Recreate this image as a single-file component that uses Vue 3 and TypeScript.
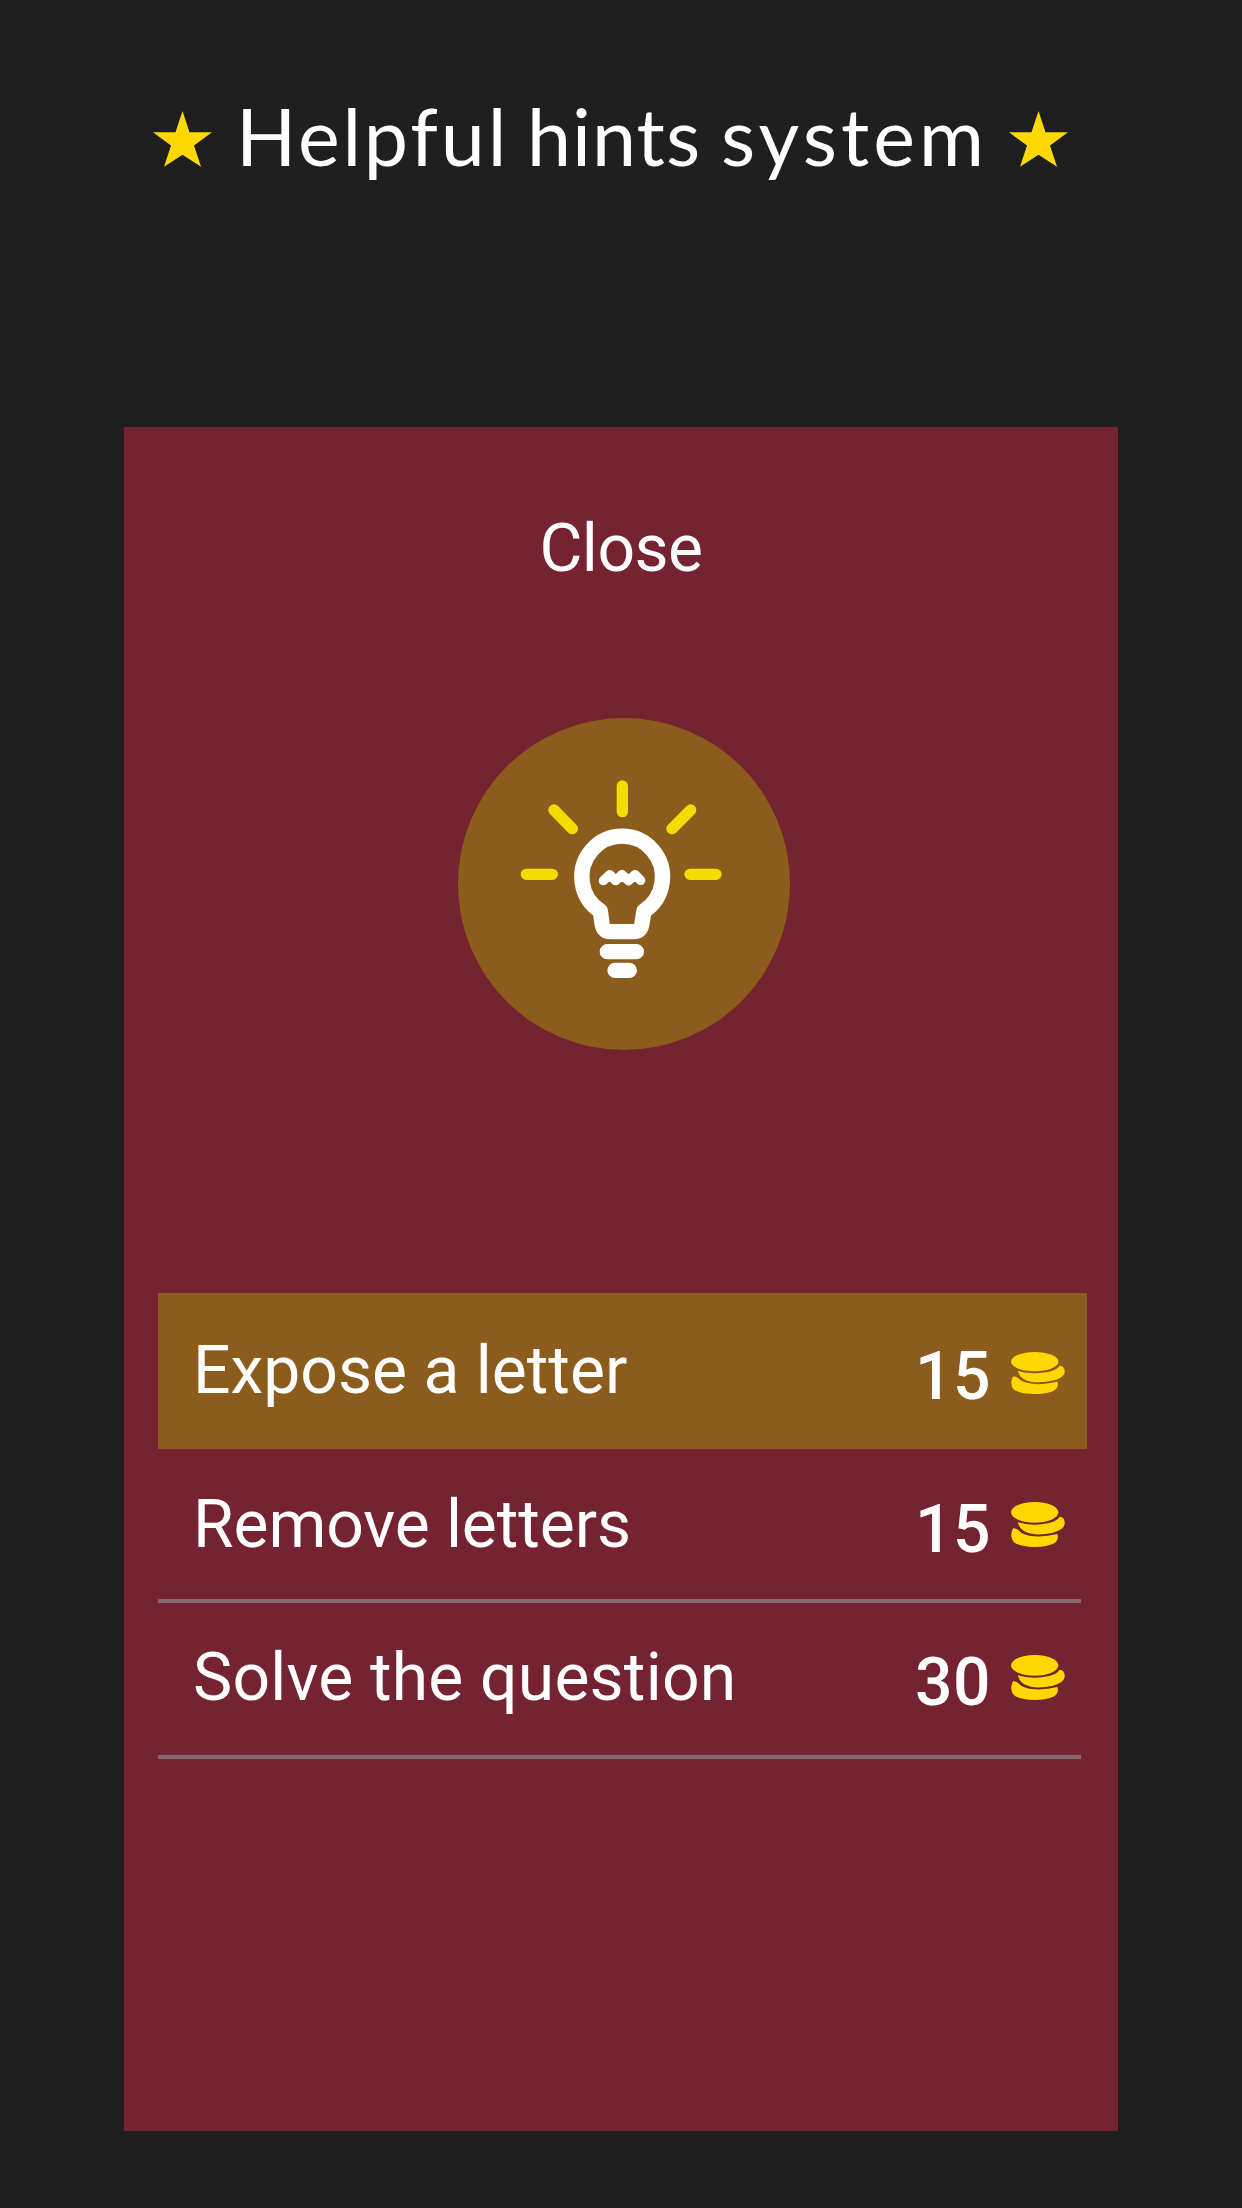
<script setup lang="ts">
interface Hint {
  label: string
  cost: number
  modifier: string
}

const hints: Hint[] = [
  { label: 'Expose a letter', cost: 15, modifier: 'active' },
  { label: 'Remove letters', cost: 15, modifier: 'middle' },
  { label: 'Solve the question', cost: 30, modifier: 'last' },
]
</script>

<template>
  <main class="screen">
    <header class="title">
      <svg class="star" viewBox="0 0 59 56">
        <path d="M29.5 0 36.5 21.3H59L41 34.6 48 55.7 29.5 43.7 11 55.7 18 34.6 0 21.3H22.5Z" />
      </svg>
      <h1 class="heading">
        <span class="word first">Helpful</span>
        <span class="word second">hints</span>
        <span class="word third">system</span>
      </h1>
      <svg class="star" viewBox="0 0 59 56">
        <path d="M29.5 0 36.5 21.3H59L41 34.6 48 55.7 29.5 43.7 11 55.7 18 34.6 0 21.3H22.5Z" />
      </svg>
    </header>

    <section class="panel">
      <div class="close">Close</div>

      <svg class="bulb" viewBox="54 51 996 996">
        <circle cx="552" cy="549" r="498" fill="#8c5c1c" />
        <g stroke="#f4dc00" stroke-width="34" stroke-linecap="round">
          <path d="M547 255V332M342 327 397 383M752 327 696 383M259 520H337M750 520H828" />
        </g>
        <g fill="none" stroke="#fff" stroke-linejoin="round" stroke-linecap="round">
          <path
            stroke-width="46"
            d="M481 630A121 122 0 1 1 612 630L606 667Q603 692 581 692H511Q489 692 486 667Z"
          />
          <path stroke-width="28" d="M490 539 509 521 527 539 546 521 566 539 585 521 602 538" />
          <path stroke-width="46" d="M502 752H589M525 808H568" />
        </g>
      </svg>

      <ul class="hints">
        <li v-for="hint in hints" :key="hint.label" class="hint" :class="hint.modifier">
          <span class="label">{{ hint.label }}</span>
          <span class="cost">{{ hint.cost }}</span>
          <svg class="coins" viewBox="0 0 164 135" preserveAspectRatio="none">
            <ellipse cx="72" cy="31" rx="72" ry="31" />
            <path d="M21 61Q45 69 75 68Q112 67 133 57Q144 51 148 44Q164 45 163 66Q160 84 127 92Q100 99 72 97Q27 92 21 61Z" />
            <path d="M6 79Q16 78 24 86Q36 100 72 103Q105 105 141 96Q147 116 127 126Q105 135 72 135Q30 135 9 121Q-6 104 6 79Z" />
          </svg>
        </li>
      </ul>
    </section>
  </main>
</template>

<style>
body {
  margin: 0;
  background: #1f1f1f;
}
</style>

<style scoped>
.screen {
  box-sizing: border-box;
  width: 1242px;
  height: 2208px;
  background: #1f1f1f;
  color: #fff;
  overflow: hidden;
}
.title {
  box-sizing: border-box;
  height: 427px;
  padding: 88px 0 0 153px;
  display: flex;
  align-items: flex-start;
}
.star {
  flex: none;
  width: 59px;
  height: 56px;
  margin-top: 23px;
  fill: #ffd800;
}
.heading {
  flex: none;
  display: flex;
  width: 797px;
  margin: 0;
  font: 400 79px/96px Lato, sans-serif;
  white-space: nowrap;
}
.word {
  flex: none;
}
.first {
  width: 291px;
  margin-left: 24px;
  letter-spacing: 2.8px;
}
.second {
  width: 194px;
  letter-spacing: 1px;
}
.third {
  letter-spacing: 4.1px;
}
.panel {
  box-sizing: border-box;
  width: 994px;
  height: 1704px;
  margin-left: 124px;
  padding-top: 83px;
  background: #752231;
  font-family: Roboto, sans-serif;
  font-size: 66px;
  line-height: 78px;
}
.close {
  text-align: center;
  letter-spacing: -0.5px;
}
.bulb {
  display: block;
  width: 332px;
  height: 332px;
  margin: 130px 0 0 334px;
}
.hints {
  list-style: none;
  margin: 243px 0 0 34px;
  padding: 0;
}
.hint {
  box-sizing: border-box;
  width: 923px;
  display: flex;
  align-items: flex-start;
  padding-left: 35px;
}
.active {
  width: 929px;
  height: 156px;
  padding-top: 39px;
  background: #8c5c1c;
}
.middle {
  height: 154px;
  padding-top: 37px;
  border-bottom: 4px solid #82696f;
}
.last {
  height: 156px;
  padding-top: 36px;
  border-bottom: 4px solid #82696f;
}
.label {
  width: 689px;
}
.middle .label {
  letter-spacing: -0.1px;
}
.last .label {
  letter-spacing: 0.2px;
}
.cost {
  width: 109px;
  text-align: right;
  margin-top: 6px;
  font-weight: 500;
  letter-spacing: 0.5px;
}
.middle .cost,
.last .cost {
  margin-top: 5px;
}
.coins {
  width: 54px;
  height: 45px;
  margin: 16px 0 0 20px;
  fill: #ffd800;
}
.active .coins {
  height: 42px;
  margin-top: 20px;
}
</style>
